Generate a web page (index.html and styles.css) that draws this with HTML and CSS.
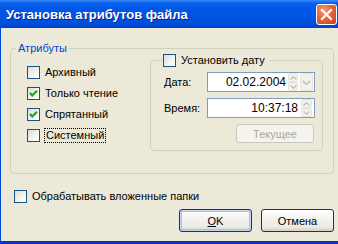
FILE: index.html
```html
<!DOCTYPE html>
<html lang="ru">
<head>
<meta charset="utf-8">
<title>Установка атрибутов файла</title>
<link rel="stylesheet" href="styles.css">
</head>
<body>
<div class="window">
  <div class="titlebar">
    <span class="title">Установка атрибутов файла</span>
    <span class="close"><svg width="13" height="13" viewBox="0 0 13 13"><path d="M2 2 L11 11 M11 2 L2 11" stroke="#fff" stroke-width="2.2" stroke-linecap="square"/></svg></span>
  </div>
  <div class="client">
    <fieldset class="group">
      <legend class="group-title">Атрибуты</legend>
      <div class="group-body">
        <div class="attrs">
          <label class="row"><span class="cb"></span><span class="lbl">Архивный</span></label>
          <label class="row"><span class="cb"><svg width="11" height="11" viewBox="0 0 11 11"><path d="M2 5 L4.3 7.5 L9 2.8" fill="none" stroke="#21a121" stroke-width="2.2"/></svg></span><span class="lbl">Только чтение</span></label>
          <label class="row"><span class="cb"><svg width="11" height="11" viewBox="0 0 11 11"><path d="M2 5 L4.3 7.5 L9 2.8" fill="none" stroke="#21a121" stroke-width="2.2"/></svg></span><span class="lbl">Спрятанный</span></label>
          <label class="row"><span class="cb"></span><span class="lbl focus">Системный</span></label>
        </div>
        <fieldset class="dategroup">
          <legend class="date-title"><span class="cb"></span><span>Установить дату</span></legend>
          <div class="field">
            <span class="flabel">Дата:</span>
            <div class="input">
              <span class="value">02.02.2004</span>
              <span class="spin"><span class="sb"><svg width="7" height="4" viewBox="0 0 7 4"><path d="M0.5 3.5 L3.5 0.8 L6.5 3.5" fill="none" stroke="#c6c3b4" stroke-width="1.4"/></svg></span><span class="sb"><svg width="7" height="4" viewBox="0 0 7 4"><path d="M0.5 0.5 L3.5 3.2 L6.5 0.5" fill="none" stroke="#c6c3b4" stroke-width="1.4"/></svg></span></span>
              <span class="drop"><svg width="9" height="5" viewBox="0 0 9 5"><path d="M0.8 0.8 L4.5 4.2 L8.2 0.8" fill="none" stroke="#c6c3b4" stroke-width="1.6"/></svg></span>
            </div>
          </div>
          <div class="field">
            <span class="flabel">Время:</span>
            <div class="input">
              <span class="value">10:37:18</span>
              <span class="spin wide"><span class="sb"><svg width="7" height="4" viewBox="0 0 7 4"><path d="M0.5 3.5 L3.5 0.8 L6.5 3.5" fill="none" stroke="#c6c3b4" stroke-width="1.4"/></svg></span><span class="sb"><svg width="7" height="4" viewBox="0 0 7 4"><path d="M0.5 0.5 L3.5 3.2 L6.5 0.5" fill="none" stroke="#c6c3b4" stroke-width="1.4"/></svg></span></span>
            </div>
          </div>
          <div class="btnrow">
            <button class="btn disabled" disabled>Текущее</button>
          </div>
        </fieldset>
      </div>
    </fieldset>
    <label class="row sub"><span class="cb"></span><span class="lbl">Обрабатывать вложенные папки</span></label>
    <div class="actions">
      <button class="btn default"><span class="u">O</span>K</button>
      <button class="btn">Отмена</button>
    </div>
  </div>
</div>
</body>
</html>
```
FILE: styles.css
```css
* { box-sizing: border-box; }
html, body { margin: 0; padding: 0; }
body {
  font-family: "Liberation Sans", Arial, sans-serif;
  font-size: 11px;
  color: #000;
  background: #ece9d8;
}
.window {
  width: 338px;
  height: 244px;
  display: flex;
  flex-direction: column;
  overflow: hidden;
}
.titlebar {
  flex: none;
  height: 28px;
  display: flex;
  align-items: center;
  justify-content: space-between;
  padding: 0 1px 0 6px;
  background: linear-gradient(#3b8cf8 0, #0a62ef 3px, #0058e8 8px, #0055e3 16px, #004ed9 24px, #003fcb 28px);
}
.title {
  color: #fff;
  font-weight: bold;
  font-size: 13px;
  text-shadow: 1px 1px 0 #0a1e8c;
  margin-top: 1px;
}
.close {
  width: 21px;
  height: 21px;
  border: 1px solid #fff;
  border-radius: 3px;
  background: radial-gradient(circle at 35% 30%, #f29a7a 0, #e2653e 45%, #c7401c 100%);
  display: flex;
  align-items: center;
  justify-content: center;
  margin-top: 1px;
}
.client {
  flex: 1;
  background: #ece9d8;
  border-left: 1px solid #0049d6;
  border-bottom: 3px solid #0735c8;
  display: flex;
  flex-direction: column;
  padding: 0 4px 0 9px;
}
.group {
  margin: 14px 0 0 0;
  padding: 0 10px 22px 16px;
  border: 1px solid #d0d0bf;
  border-radius: 4px;
  min-width: 0;
}
.group-title {
  color: #0046d5;
  padding: 0 2px;
  margin-left: -11px;
  line-height: 13px;
}
.group-body {
  display: flex;
  align-items: flex-start;
}
.attrs {
  width: 123px;
  flex: none;
  display: flex;
  flex-direction: column;
  padding-top: 7px;
}
.row {
  height: 21px;
  display: flex;
  align-items: center;
  gap: 5px;
}
.cb {
  width: 13px;
  height: 13px;
  flex: none;
  border: 1px solid #1c5180;
  background: linear-gradient(135deg, #dcdcd7 0%, #f4f4f1 60%, #ffffff 100%);
  display: flex;
  align-items: center;
  justify-content: center;
}
.lbl { line-height: 13px; }
.focus {
  outline: 1px dotted #000;
  outline-offset: 0;
  padding: 0 1px;
}
.dategroup {
  width: 173px;
  flex: none;
  margin: -2px 0 0 0;
  padding: 5px 7px 7px 13px;
  border: 1px solid #d0d0bf;
  border-radius: 4px;
  min-width: 0;
}
.date-title {
  display: flex;
  align-items: center;
  gap: 5px;
  padding: 0 4px 0 1px;
  margin-left: -2px;
  height: 14px;
}
.field {
  display: flex;
  align-items: center;
  height: 20px;
  margin-bottom: 6px;
}
.flabel {
  width: 43px;
  flex: none;
}
.input {
  width: 108px;
  height: 20px;
  border: 1px solid #7f9db9;
  background: #fff;
  display: flex;
  align-items: center;
  padding: 0 1px;
}
.value {
  flex: 1;
  text-align: right;
  font-size: 12px;
}
.spin {
  width: 10px;
  height: 18px;
  margin-left: 2px;
  display: flex;
  flex-direction: column;
}
.spin.wide { width: 11px; margin-left: 3px; margin-right: 1px; }
.sb {
  flex: 1;
  background: #f3f2ec;
  border: 1px solid #e6e4da;
  border-radius: 2px;
  display: flex;
  align-items: center;
  justify-content: center;
}
.drop {
  width: 13px;
  height: 18px;
  margin-left: 2px;
  background: #f3f2ec;
  border: 1px solid #e6e4da;
  border-radius: 2px;
  display: flex;
  align-items: center;
  justify-content: center;
}
.btnrow {
  display: flex;
  justify-content: flex-end;
  padding-right: 1px;
  margin-top: 3px;
}
.btn {
  font-family: "Liberation Sans", Arial, sans-serif;
  font-size: 11px;
  width: 73px;
  height: 23px;
  border: 1px solid #003c74;
  border-radius: 3px;
  background: linear-gradient(#ffffff 0%, #f4f3ee 40%, #ecebe6 80%, #d6d0c5 100%);
  color: #000;
  padding: 0;
}
.btn.disabled {
  width: 78px;
  height: 19px;
  border-color: #c9c7ba;
  background: #f4f3ee;
  color: #aca899;
}
.btn.default {
  box-shadow: inset 0 0 0 1px #c5d5f5, inset 0 0 0 2px #a9c0ec;
}
.u { text-decoration: underline; }
.sub {
  margin: 12px 0 0 4px;
  gap: 5px;
}
.actions {
  display: flex;
  justify-content: flex-end;
  gap: 9px;
  margin-top: 2px;
}
```
